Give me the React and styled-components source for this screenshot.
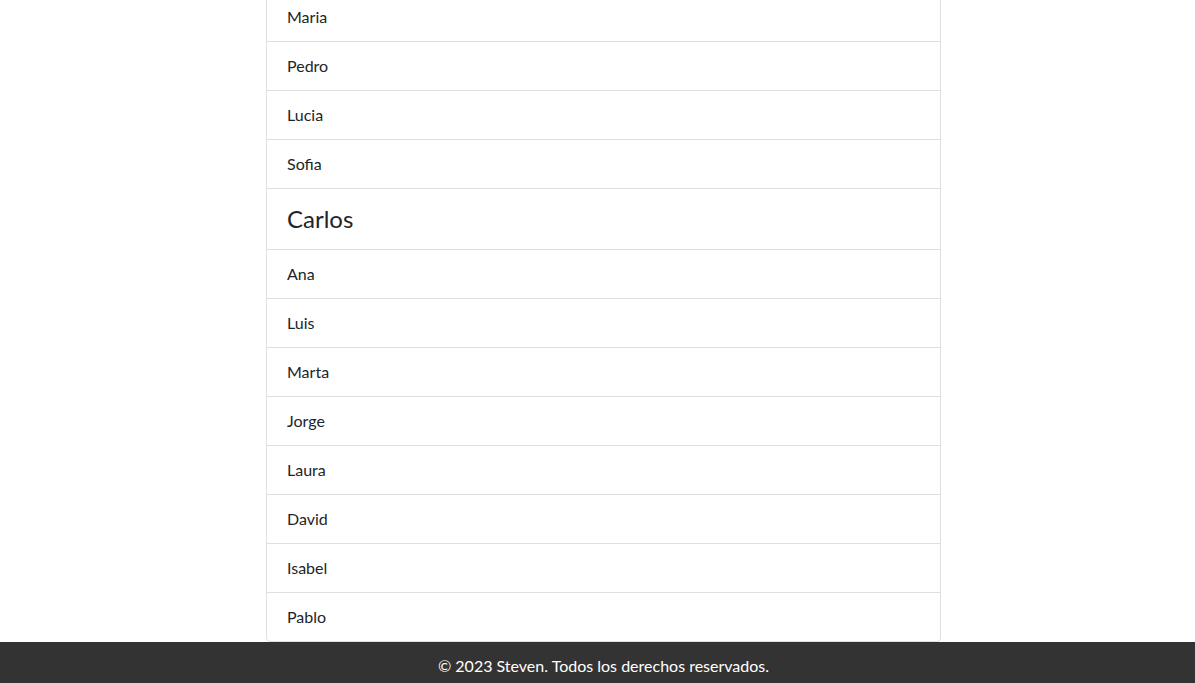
import React from "react";
import styled, { createGlobalStyle } from "styled-components";

const Global = createGlobalStyle`
  html, body { margin: 0; padding: 0; background: #fff; }
  body {
    font-family: "Lato", "Noto Sans", sans-serif;
    font-size: 16px;
    line-height: 1.5;
    color: #212529;
  }
`;

const Page = styled.div`
  display: flex;
  flex-direction: column;
  padding-left: 12px;
`;

const List = styled.ul`
  list-style: none;
  margin: -8px auto 0;
  padding: 0;
  width: 675px;
  box-sizing: border-box;
  border: 1px solid #dfdfdf;
  border-radius: 0 0 4px 4px;
  background: #fff;
`;

const Item = styled.li`
  padding: 12px 20px;
  line-height: 24px;
  font-size: 16px;
  color: #212529;
  & + & { border-top: 1px solid #dfdfdf; }
`;

const Heading = styled.h4`
  margin: 0 0 3px;
  padding-top: 4px;
  font-size: 24px;
  font-weight: 400;
  line-height: 28.8px;
  color: #212529;
`;

const Footer = styled.footer`
  background: #333;
  color: #fff;
  text-align: center;
  padding: 12px 0 12px 12px;
  margin-left: -12px;
  line-height: 24px;
  font-size: 16px;
`;

const before = ["Maria", "Pedro", "Lucia", "Sofia"];
const after = ["Ana", "Luis", "Marta", "Jorge", "Laura", "David", "Isabel", "Pablo"];

export default function App() {
  return (
    <>
      <Global />
      <Page>
        <List>
          {before.map((n) => (
            <Item key={n}>{n}</Item>
          ))}
          <Item>
            <Heading>Carlos</Heading>
          </Item>
          {after.map((n) => (
            <Item key={n}>{n}</Item>
          ))}
        </List>
        <Footer>© 2023 Steven. Todos los derechos reservados.</Footer>
      </Page>
    </>
  );
}
